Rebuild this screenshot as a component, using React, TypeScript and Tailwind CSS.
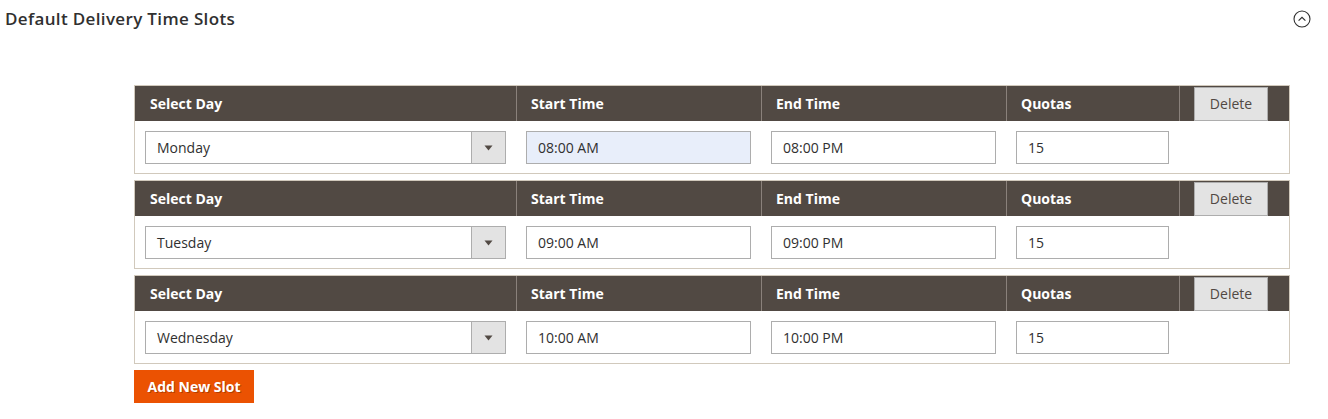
type Slot = {
  day: string;
  start: string;
  end: string;
  quota: string;
  focused?: boolean;
};

const SLOTS: Slot[] = [
  { day: "Monday", start: "08:00 AM", end: "08:00 PM", quota: "15", focused: true },
  { day: "Tuesday", start: "09:00 AM", end: "09:00 PM", quota: "15" },
  { day: "Wednesday", start: "10:00 AM", end: "10:00 PM", quota: "15" },
];

const font = { fontFamily: '"Open Sans", "Noto Sans", Arial, sans-serif' };

function CollapseIcon() {
  return (
    <svg width="18" height="18" viewBox="0 0 18 18" fill="none" className="text-[#303030]">
      <circle cx="9" cy="9" r="8" stroke="currentColor" strokeWidth="1.1" />
      <path d="M5.6 10.6 L9 7.3 L12.4 10.6" stroke="currentColor" strokeWidth="1.2" fill="none" />
    </svg>
  );
}

function SlotBlock({ slot }: { slot: Slot }) {
  const input = "h-[33px] w-full border border-[#adadad] px-[11px] text-[14px] text-[#303030] flex items-center";
  return (
    <div className="border border-[#d1c9bc] mb-1.5">
      {/* header row */}
      <div className="flex h-[35px] bg-[#514943] text-white text-[14px] font-bold">
        <div className="w-[381px] flex items-center pl-[15px]">Select Day</div>
        <div className="w-[245px] flex items-center pl-[14px] border-l border-[#8a817b]">Start Time</div>
        <div className="w-[245px] flex items-center pl-[14px] border-l border-[#8a817b]">End Time</div>
        <div className="w-[173px] flex items-center pl-[14px] border-l border-[#8a817b]">Quotas</div>
        <div className="flex-1 flex items-center pl-[14px] border-l border-[#8a817b]">
          <button className="h-[34px] w-[74px] bg-[#e3e3e3] border border-[#adadad] text-[#514943] font-normal text-[14px]">
            Delete
          </button>
        </div>
      </div>
      {/* body row */}
      <div className="flex bg-white pt-[10px] pb-[9px]">
        <div className="w-[381px] px-[10px]">
          <div className={`${input} pr-0 justify-between`}>
            <span>{slot.day}</span>
            <span className="h-full w-[34px] bg-[#e3e3e3] border-l border-[#adadad] flex items-center justify-center">
              <svg width="9" height="6" viewBox="0 0 9 6">
                <path d="M0.5 0.5 H8.5 L4.5 5.5 Z" fill="#514943" />
              </svg>
            </span>
          </div>
        </div>
        <div className="w-[245px] px-[10px]">
          <div className={`${input} ${slot.focused ? "bg-[#e8eefa]" : "bg-white"}`}>{slot.start}</div>
        </div>
        <div className="w-[245px] px-[10px]">
          <div className={input}>{slot.end}</div>
        </div>
        <div className="w-[173px] px-[10px]">
          <div className={input}>{slot.quota}</div>
        </div>
      </div>
    </div>
  );
}

export default function App() {
  return (
    <div className="bg-white w-[1328px] h-[419px] overflow-hidden" style={font}>
      <div className="flex items-center justify-between h-[38px] pl-[5px] pr-[17px]">
        <h2 className="text-[17px] font-semibold text-[#303030] tracking-[0.35px]">Default Delivery Time Slots</h2>
        <CollapseIcon />
      </div>
      <div className="pl-[134px] pr-[38px] pt-[47px]">
        {SLOTS.map((s) => (
          <SlotBlock key={s.day} slot={s} />
        ))}
        <button
          className="h-[33px] w-[120px] bg-[#eb5202] text-white text-[14px] font-bold"
          style={{ textShadow: "1px 1px 0 rgba(0,0,0,0.25)" }}
        >
          Add New Slot
        </button>
      </div>
    </div>
  );
}
